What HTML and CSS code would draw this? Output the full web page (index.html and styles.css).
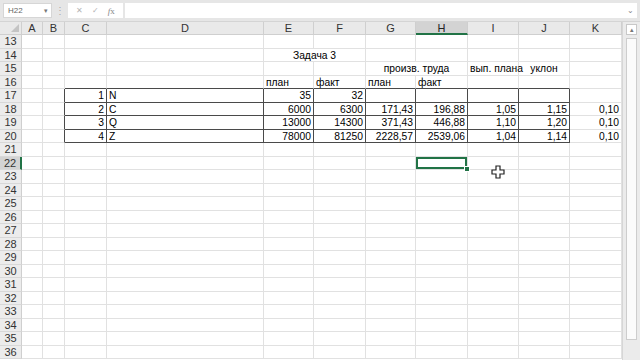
FILE: index.html
```html
<!DOCTYPE html>
<html lang="ru">
<head>
  <meta charset="UTF-8" />
  <title>Задача 3</title>
  <link rel="stylesheet" href="styles.css">
</head>
<body>
  <div class="formula-bar">
    <div class="name-box">H22<span class="drop">&#9662;</span></div>
    <div class="dots">&#8942;</div>
    <div class="fx-box">
      <span>&#10005;</span>
      <span>&#10003;</span>
      <span class="fx"><i>f</i>x</span>
    </div>
    <div class="formula-input"><span class="chev">&#8964;</span></div>
  </div>

  <div class="workspace">
    <div id="sheet" class="sheet"></div>
    <div class="vscroll">
      <div class="arrow">&#9652;</div>
      <div class="thumb"></div>
    </div>
    <svg class="cursor" width="14" height="14" viewBox="0 0 14 14">
      <path d="M5 1h4v4h4v4h-4v4h-4v-4h-4v-4h4z" fill="#fff" stroke="#222" stroke-width="1.2"/>
    </svg>
  </div>

  <script>
    const cols = [
      ['A', 21], ['B', 22], ['C', 42], ['D', 157], ['E', 50], ['F', 52],
      ['G', 50], ['H', 52], ['I', 51], ['J', 51], ['K', 52]
    ];

    // cell: [text, align]; span2 covers the next cell too
    const data = {
      E14: ['Задача 3', 'span2'],
      G15: ['произв. труда', 'span2'],
      I15: ['вып. плана', 'l'],
      J15: ['уклон', 'c'],
      E16: ['план', 'l'], F16: ['факт', 'l'], G16: ['план', 'l'], H16: ['факт', 'l'],
      C17: ['1', 'r'], D17: ['N', 'l'], E17: ['35', 'r'], F17: ['32', 'r'],
      C18: ['2', 'r'], D18: ['C', 'l'], E18: ['6000', 'r'], F18: ['6300', 'r'],
      G18: ['171,43', 'r'], H18: ['196,88', 'r'], I18: ['1,05', 'r'], J18: ['1,15', 'r'], K18: ['0,10', 'r'],
      C19: ['3', 'r'], D19: ['Q', 'l'], E19: ['13000', 'r'], F19: ['14300', 'r'],
      G19: ['371,43', 'r'], H19: ['446,88', 'r'], I19: ['1,10', 'r'], J19: ['1,20', 'r'], K19: ['0,10', 'r'],
      C20: ['4', 'r'], D20: ['Z', 'l'], E20: ['78000', 'r'], F20: ['81250', 'r'],
      G20: ['2228,57', 'r'], H20: ['2539,06', 'r'], I20: ['1,04', 'r'], J20: ['1,14', 'r'], K20: ['0,10', 'r']
    };

    const boxed = 'CDEFGHIJ';
    const sheet = document.getElementById('sheet');
    sheet.style.gridTemplateColumns = '22px ' + cols.map(c => c[1] + 'px').join(' ');

    function cell(cls, text) {
      const d = document.createElement('div');
      d.className = cls;
      if (text) d.textContent = text;
      sheet.appendChild(d);
      return d;
    }

    cell('corner');
    cols.forEach(c => cell('col-head' + (c[0] === 'H' ? ' active' : ''), c[0]));

    for (let r = 13; r <= 36; r++) {
      cell('row-head' + (r === 22 ? ' active' : ''), String(r));
      let skip = false;
      cols.forEach(c => {
        if (skip) { skip = false; return; }
        const key = c[0] + r;
        let cls = 'cell';
        if (boxed.includes(c[0]) && r >= 17 && r <= 20) cls += ' bx';
        if (boxed.includes(c[0]) && r === 16) cls += ' bt';
        if (c[0] === 'B' && r >= 17 && r <= 20) cls += ' br';
        if (key === 'H22') cls += ' sel';
        const v = data[key];
        if (v) cls += ' ' + v[1];
        if (v && v[1] === 'span2') skip = true;
        cell(cls, v ? v[0] : '');
      });
    }
  </script>
</body>
</html>
```

FILE: styles.css
```css
body {
  margin: 0;
  width: 640px;
  height: 360px;
  overflow: hidden;
  font-family: "Liberation Sans", Arial, sans-serif;
  background: #fff;
  color: #000;
}

.formula-bar {
  height: 22px;
  background: #e6e6e6;
  display: flex;
  align-items: center;
  padding: 0 3px;
  box-sizing: border-box;
  border-bottom: 1px solid #d4d4d4;
}

.name-box {
  width: 49px;
  height: 15px;
  background: #fff;
  border: 1px solid #d6d6d6;
  box-sizing: border-box;
  font-size: 8px;
  color: #666;
  display: flex;
  align-items: center;
  justify-content: space-between;
  padding: 0 3px 0 4px;
}

.drop {
  font-size: 7px;
  color: #777;
}

.dots {
  width: 16px;
  text-align: center;
  font-size: 10px;
  color: #aaa;
}

.fx-box {
  width: 55px;
  height: 15px;
  background: #fff;
  display: flex;
  align-items: center;
  justify-content: space-around;
  font-size: 8px;
  color: #b4b4b4;
  padding: 0 4px;
  box-sizing: border-box;
}

.fx {
  color: #888;
  font-family: "Liberation Serif", serif;
  font-size: 9px;
}

.formula-input {
  flex: 1;
  height: 15px;
  margin-left: 2px;
  background: #fff;
  display: flex;
  justify-content: flex-end;
  align-items: center;
  padding-right: 3px;
}

.chev {
  font-size: 8px;
  color: #888;
  line-height: 6px;
}

.workspace {
  position: relative;
  display: flex;
}

.sheet {
  display: grid;
  grid-template-rows: 13px;
  grid-auto-rows: 13.5px;
  font-size: 11px;
}

.corner,
.col-head,
.row-head {
  background: #e9e9e9;
  color: #333;
  box-sizing: border-box;
  border-right: 1px solid #cfcfcf;
  border-bottom: 1px solid #cfcfcf;
}

.corner {
  position: relative;
}

.corner::after {
  content: "";
  position: absolute;
  right: 2px;
  bottom: 2px;
  border-left: 8px solid transparent;
  border-bottom: 8px solid #c4c4c4;
}

.col-head {
  text-align: center;
  line-height: 12px;
}

.row-head {
  text-align: center;
  line-height: 13px;
  background: #ececec;
  border-bottom-color: #d8d8d8;
}

.col-head.active {
  background: #d3d3d3;
  border-bottom: 2px solid #217346;
  color: #222;
}

.row-head.active {
  background: #d3d3d3;
  border-right: 2px solid #217346;
}

.cell {
  box-sizing: border-box;
  border-right: 1px solid #e1e1e1;
  border-bottom: 1px solid #e1e1e1;
  font-size: 10.3px;
  line-height: 13px;
  padding: 0 2px;
  white-space: nowrap;
  overflow: visible;
}

.bx {
  border-right-color: #4a4a4a;
  border-bottom-color: #4a4a4a;
}

.bt {
  border-bottom-color: #4a4a4a;
}

.br {
  border-right-color: #4a4a4a;
}

.r {
  text-align: right;
}

.l {
  text-align: left;
}

.c {
  text-align: center;
}

.span2 {
  text-align: center;
  grid-column: span 2;
}

.sel {
  position: relative;
  box-shadow: inset 0 0 0 2px #217346;
}

.sel::after {
  content: "";
  position: absolute;
  right: -3px;
  bottom: -3px;
  width: 4px;
  height: 4px;
  background: #217346;
  border: 1px solid #fff;
}

.vscroll {
  width: 18px;
  height: 338px;
  background: #ebebeb;
  border-left: 1px solid #d6d6d6;
  box-sizing: border-box;
  position: relative;
}

.arrow {
  margin: 2px auto 0;
  width: 9px;
  height: 9px;
  background: #fff;
  border: 1px solid #c8c8c8;
  font-size: 7px;
  line-height: 9px;
  text-align: center;
  color: #777;
}

.thumb {
  margin: 3px auto 0;
  width: 9px;
  height: 300px;
  background: #fbfbfb;
  border: 1px solid #cdcdcd;
}

.cursor {
  position: absolute;
  left: 491px;
  top: 143px;
}
```
